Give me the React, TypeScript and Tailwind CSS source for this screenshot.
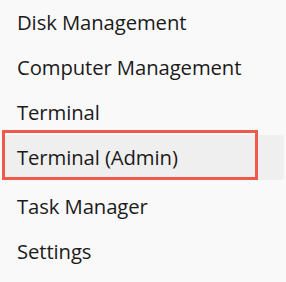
const items = ['Disk Management', 'Computer Management', 'Terminal', 'Terminal (Admin)', 'Task Manager', 'Settings'];

export default function App() {
  return (
    <div className="w-[286px] h-[282px] bg-[#f9f9f9] overflow-hidden relative" style={{ fontFamily: '"Open Sans", "Noto Sans", sans-serif' }}>
      <div className="flex flex-col pl-[4px] pr-[2px]">
        {items.map((label, i) => (
          <div
            key={label}
            className={
              'h-[45px] flex items-center pl-[13px] rounded-[4px] text-[20.3px] tracking-[-0.1px] text-[#1b1b1b] ' +
              (i === 3 ? 'bg-[#efefef] mb-[4px]' : '')
            }
          >
            {label}
          </div>
        ))}
      </div>
      <div className="absolute left-[2px] top-[130px] w-[256px] h-[50px] border-[3px] border-[#ef5a4b]" />
    </div>
  );
}
